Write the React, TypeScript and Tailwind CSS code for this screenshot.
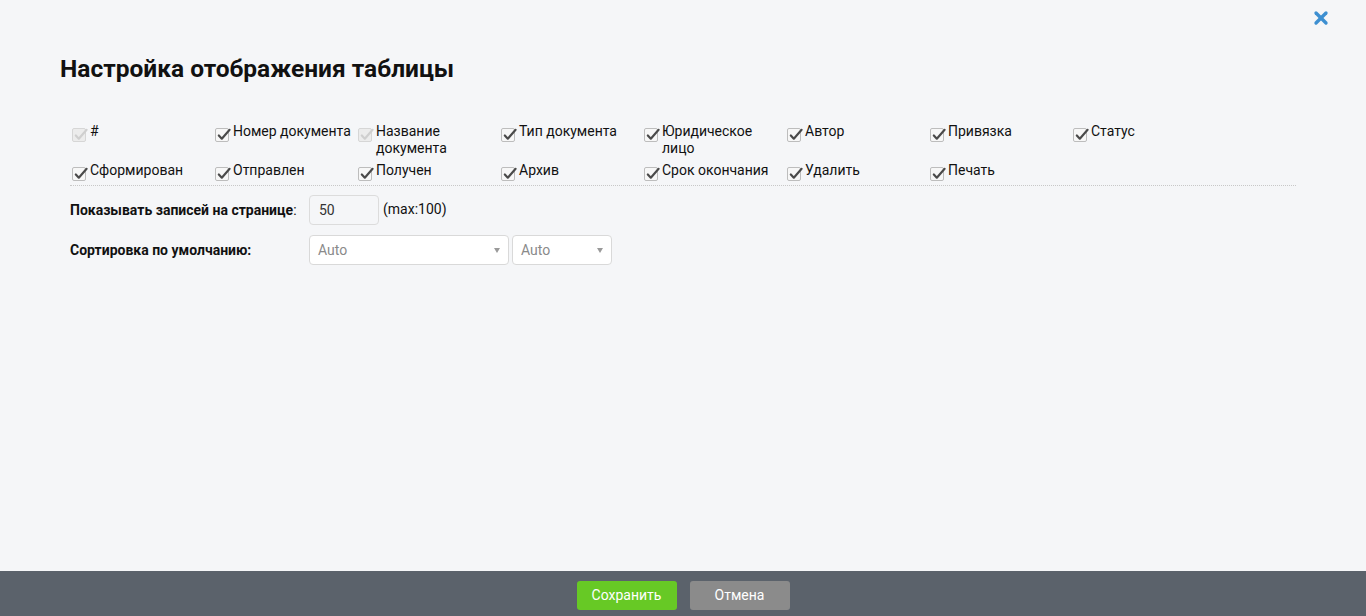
import { X } from 'lucide-react'

const COLUMNS: { label: string; disabled?: boolean }[] = [
  { label: '#', disabled: true },
  { label: 'Номер документа' },
  { label: 'Название документа', disabled: true },
  { label: 'Тип документа' },
  { label: 'Юридическое лицо' },
  { label: 'Автор' },
  { label: 'Привязка' },
  { label: 'Статус' },
  { label: 'Сформирован' },
  { label: 'Отправлен' },
  { label: 'Получен' },
  { label: 'Архив' },
  { label: 'Срок окончания' },
  { label: 'Удалить' },
  { label: 'Печать' },
]

function Check({ disabled }: { disabled?: boolean }) {
  return (
    <span className="relative shrink-0 w-[14px] h-[14px] ml-[2px] mt-[5px] mr-[4px]">
      <span
        className={
          'absolute inset-0 rounded-[2px] border ' +
          (disabled ? 'border-[#d6d6d6] bg-[#ececec]' : 'border-[#bdbdbd] bg-[#f7f7f7]')
        }
      />
      <svg viewBox="0 0 16 16" className="absolute left-[1px] top-[-1px] w-[15px] h-[15px]">
        <path
          d="M3 9 L6.2 12.5 L14.5 3"
          fill="none"
          stroke={disabled ? '#cfcfcf' : '#4a4a4a'}
          strokeWidth="2.3"
          strokeLinecap="round"
          strokeLinejoin="round"
        />
      </svg>
    </span>
  )
}

function Select({ width }: { width: string }) {
  return (
    <div className={'flex items-center justify-between h-[30px] px-[8px] rounded-[4px] border border-[#d9d9d9] bg-white ' + width}>
      <span className="text-[14px] text-[#8a8a8a]">Auto</span>
      <span className="w-0 h-0 border-l-[3.5px] border-r-[3.5px] border-t-[5px] border-l-transparent border-r-transparent border-t-[#9a9a9a]" />
    </div>
  )
}

export default function App() {
  return (
    <div className="relative h-[616px] flex flex-col bg-[#f5f6f8] text-[#111] font-['Roboto',sans-serif]">
      <button className="absolute right-[35px] top-[8px] text-[#3d8fd1]">
        <X className="w-[20px] h-[20px]" strokeWidth={4} />
      </button>

      <div className="flex-1">
        <h1 className="pt-[55px] pl-[60px] text-[24.5px] leading-[28px] font-bold">Настройка отображения таблицы</h1>

        <div className="mt-[40px] mx-[70px]">
          <div className="grid grid-cols-[repeat(8,143px)] gap-y-[5px] pb-[4px] border-b border-dotted border-[#c8c8c8]">
            {COLUMNS.map((c) => (
              <label key={c.label} className="flex items-start text-[14px] leading-[17px]">
                <Check disabled={c.disabled} />
                <span className="pr-[4px]">{c.label}</span>
              </label>
            ))}
          </div>

          <div className="mt-[9px] flex items-center text-[14px]">
            <span className="w-[239px] font-bold">
              Показывать записей на странице<span className="font-normal">:</span>
            </span>
            <div className="w-[70px] h-[30px] flex items-center px-[9px] rounded-[4px] border border-[#dcdcdc] bg-[#f5f6f8] text-[#333]">
              50
            </div>
            <span className="ml-[4px] mb-[2px]">(max:100)</span>
          </div>

          <div className="mt-[10px] flex items-center text-[14px]">
            <span className="w-[239px] font-bold">Сортировка по умолчанию:</span>
            <div className="flex gap-[3px]">
              <Select width="w-[200px]" />
              <Select width="w-[100px]" />
            </div>
          </div>
        </div>
      </div>

      <div className="h-[45px] bg-[#5b626b] flex items-start justify-center gap-[13px] pt-[10px]">
        <button className="w-[100px] h-[29px] rounded-[3px] bg-[#67c925] text-white text-[14px]">Сохранить</button>
        <button className="w-[100px] h-[29px] rounded-[3px] bg-[#8b8b8b] text-white text-[14px]">Отмена</button>
      </div>
    </div>
  )
}
